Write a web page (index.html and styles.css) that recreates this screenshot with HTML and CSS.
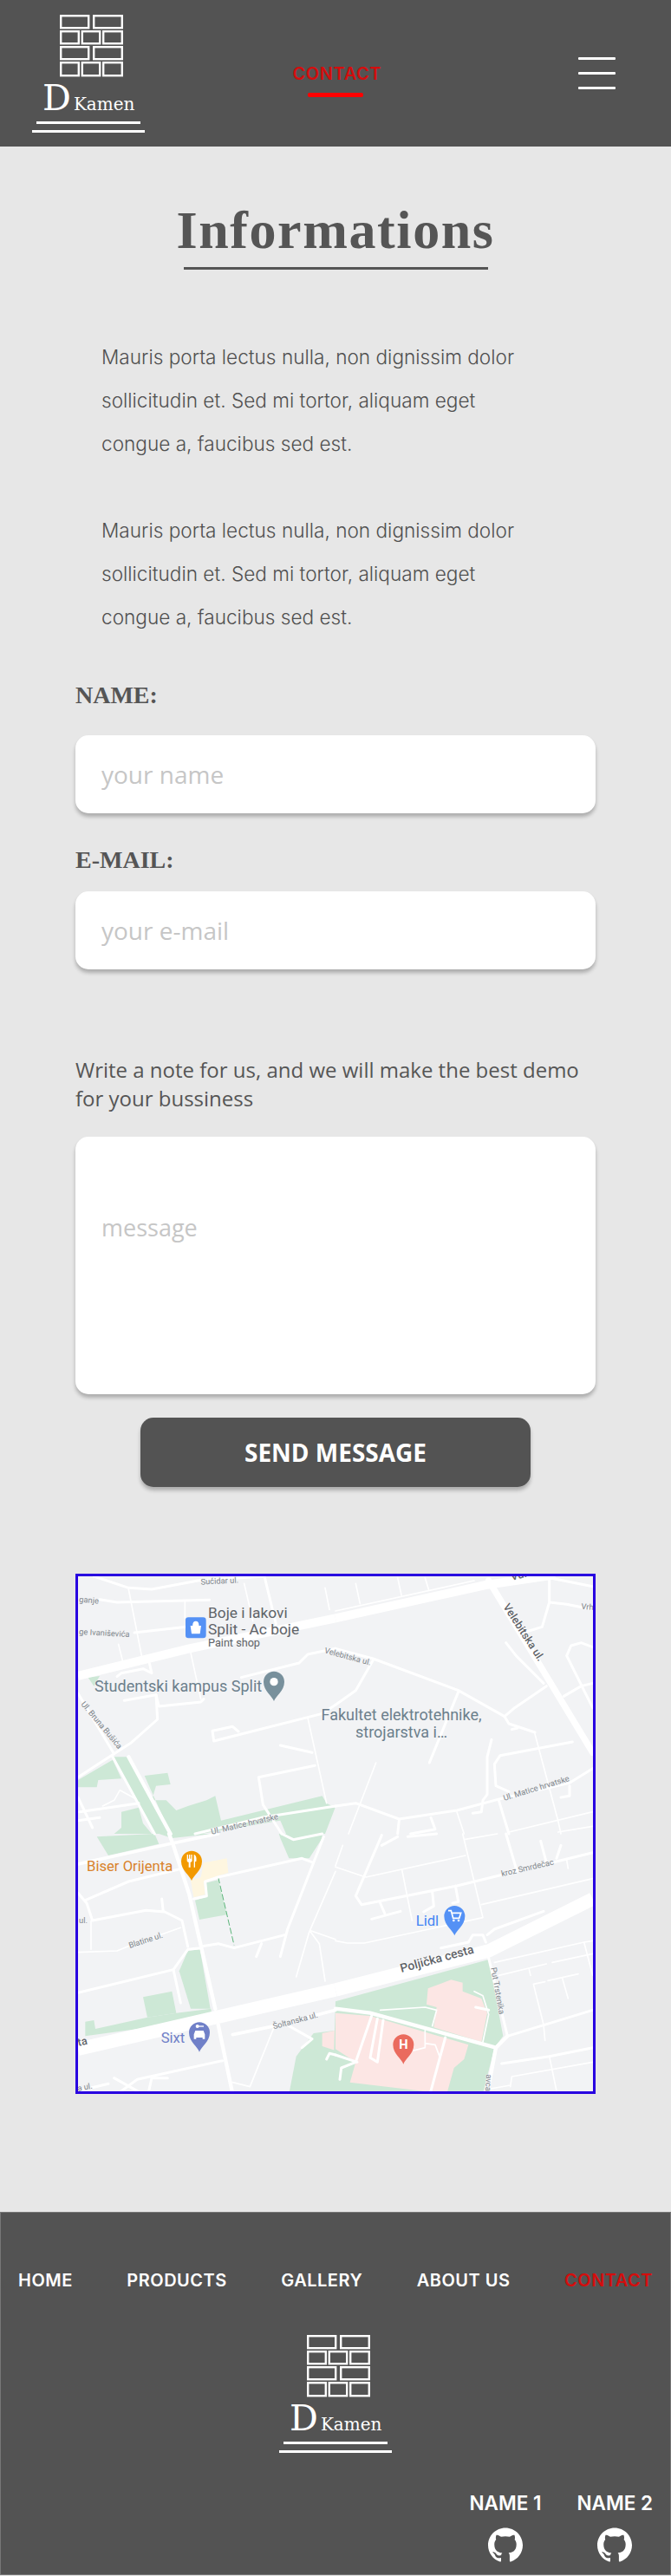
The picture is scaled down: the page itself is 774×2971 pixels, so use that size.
FILE: index.html
```html
<!DOCTYPE html>
<html lang="en">
<head>
    <meta charset="UTF-8">
    <meta name="viewport" content="width=device-width, initial-scale=1.0">
    <title>Contact</title>
    <link rel="stylesheet" href="styles.css">
</head>
<body>
    <header class="topbar">
        <a class="logo logo-top" href="#">
            <svg class="bricks" viewBox="0 0 73 72">
                <rect x="1.2" y="1.2" width="32" height="14"/><rect x="39.2" y="1.2" width="32.6" height="14"/>
                <rect x="1.2" y="19.2" width="20.6" height="14"/><rect x="25.8" y="19.2" width="20.4" height="14"/><rect x="50.2" y="19.2" width="21.6" height="14"/>
                <rect x="1.2" y="37.2" width="32" height="14"/><rect x="39.2" y="37.2" width="32.6" height="14"/>
                <rect x="1.2" y="55.2" width="20.6" height="15"/><rect x="25.8" y="55.2" width="20.4" height="15"/><rect x="50.2" y="55.2" width="21.6" height="15"/>
            </svg>
            <span class="wordmark"><span class="wordmark-d">D</span><span class="wordmark-rest">Kamen</span></span>
            <span class="logo-line short"></span>
            <span class="logo-line"></span>
        </a>
        <a class="current-page" href="#">CONTACT</a>
        <button class="burger" aria-label="Menu"><span></span><span></span><span></span></button>
    </header>

    <main class="content">
        <h1 class="title">Informations</h1>
        <div class="title-rule"></div>

        <section class="intro">
            <p>Mauris porta lectus nulla, non dignissim dolor sollicitudin et. Sed mi tortor, aliquam eget congue a, faucibus sed est.</p>
            <p>Mauris porta lectus nulla, non dignissim dolor sollicitudin et. Sed mi tortor, aliquam eget congue a, faucibus sed est.</p>
        </section>

        <form class="contact-form">
            <label class="field-label" for="name">NAME:</label>
            <input class="field" type="text" id="name" placeholder="your name">
            <label class="field-label email-label" for="email">E-MAIL:</label>
            <input class="field" type="text" id="email" placeholder="your e-mail">
            <p class="note">Write a note for us, and we will make the best demo for your bussiness</p>
            <textarea class="field message" placeholder="message"></textarea>
            <button class="send" type="submit">SEND MESSAGE</button>
        </form>

        <div class="map">
            <svg viewBox="15 15 1782 1782">
                <defs>
                    <path id="pin" d="M0 67C-5 50-36 32-36 0A36 36 0 1 1 36 0C36 32 5 50 0 67Z"/>
                </defs>
                <rect class="land" x="0" y="0" width="1812" height="1812"/>

                <!-- areas -->
                <g class="green">
                    <polygon points="50,365 90,360 70,395"/>
                    <polygon points="15,720 135,650 165,715 85,720 80,745 15,745"/>
                    <polygon points="135,640 190,640 335,906 280,906"/>
                    <polygon points="245,705 325,695 335,735 285,740 270,790 320,790 355,825 395,810 460,790 490,775 510,860 860,775 875,800 905,815 870,906 735,906 715,860 440,906 335,906"/>
                    <polygon points="165,830 225,815 240,870 270,906 140,906 165,885"/>
                </g>
                <g class="green" transform="translate(0,906)">
                    <polygon points="80,10 280,0 295,35 120,75"/>
                    <polygon points="295,0 480,0 340,15"/>
                    <polygon points="715,15 745,85 815,85 860,15 860,0 710,0"/>
                    <polygon points="420,230 455,220 455,170 500,160 530,280 435,297"/>
                    <polygon points="365,475 395,405 437,400 473,605 405,605"/>
                    <polygon points="240,565 340,545 355,620 255,635"/>
                    <polygon points="40,650 70,645 75,675 255,635 355,620 475,605 480,640 40,700"/>
                    <polygon points="745,900 770,770 830,690 906,680 906,900"/>
                </g>
                <g transform="translate(0,906)">
                    <polygon class="sand" points="405,160 440,150 450,100 530,85 535,135 500,145 450,165 455,210 415,220"/>
                    <polygon class="rose" points="860,690 906,680 906,750 860,735"/>
                    <path class="dashed" d="M500 150L555 385"/>
                </g>
                <g transform="translate(906,906)">
                    <polygon class="green" points="0,580 530,435 580,700 550,740 510,900 -10,900"/>
                    <polygon class="rose" points="320,535 400,505 440,515 440,545 505,570 525,620 505,720 340,670 350,600 315,590"/>
                    <polygon class="rose" points="0,620 120,630 460,730 445,780 410,810 385,900 50,860 70,790 0,745"/>
                </g>

                <!-- top left -->
                <g class="road w5">
                    <path d="M190 60L235 290M155 250L170 310M870 55L885 130M810 505L875 800M385 100L385 160M405 280L440 440"/>
                    <path d="M590 40L620 170"/>
                </g>
                <g class="road w8">
                    <path d="M70 15L190 55L270 60L430 30L660 15M660 15L700 180M90 95L150 105L470 97M210 210L390 190"/>
                    <path d="M150 362L165 350L240 335L270 350L262 315M175 445L285 425L295 465L440 450L450 440"/>
                    <path d="M285 425L290 510L200 590L15 710M15 420L140 630M135 640L280 906"/>
                    <path d="M580 365L780 315L810 285L906 265M485 585L480 550L550 535L570 552M485 585L860 490L906 460"/>
                    <path d="M715 600L825 625M640 710L835 670M640 710L655 805L720 906M20 830L225 800M15 780L65 885M15 860L90 850"/>
                    <path d="M420 906L650 850L906 810"/>
                </g>
                <path class="road w5" d="M100 810L140 790L160 755L215 785"/>
                <path class="road w12" d="M190 640L335 906"/>
                <path class="road w30" d="M15 360L400 265L906 160"/>

                <!-- top right -->
                <g transform="translate(906,0)">
                    <g class="road w5">
                        <path d="M70 40L85 110M215 20L228 80M310 20L322 60M0 135L480 30M690 560L770 860L780 906M140 660L45 906M420 830L445 906M600 900L890 830M770 900L890 880"/>
                    </g>
                    <g class="road w8">
                        <path d="M740 20L740 105L715 190L650 210M740 20L890 50M740 105L800 112L890 130M590 245L625 290L720 385M730 395L620 470L585 500"/>
                        <path d="M0 265L130 300L425 410L585 500L600 525L690 555M130 305L70 410L0 460M425 415L325 660M610 545L630 540"/>
                        <path d="M820 588L570 635L550 665L555 740L600 760M540 580L525 640L525 770L510 790L505 830L475 835"/>
                        <path d="M800 290L815 255L850 245L890 260M800 290L890 470M790 430L850 395L890 385"/>
                        <path d="M890 680L810 730L570 785L420 825L220 855L70 800L0 810M810 740L810 775L780 780"/>
                        <path d="M220 860L215 906M330 850L345 890L260 906M565 790L600 906"/>
                    </g>
                    <path class="road w30" d="M0 160L520 45L760 10"/>
                    <path class="road w20" d="M530 30L890 625"/>
                </g>

                <!-- bottom left -->
                <g transform="translate(0,906)">
                    <g class="road w5">
                        <path d="M60 300L60 400M15 410L150 405L200 385L370 325M695 665L610 875L550 860M815 340L770 495M820 340L850 380L870 510M820 335L906 365M906 130L815 340"/>
                    </g>
                    <g class="road w8">
                        <path d="M40 230L190 165L375 120M15 205L45 240L65 300M65 300L250 265L315 270L375 300L395 390M305 225L310 270"/>
                        <path d="M440 395L395 400L345 470L15 550M345 470L370 585M440 390L500 380L555 395L730 350"/>
                        <path d="M715 425L740 330L865 10M650 380L632 425M415 225L460 215L455 165L500 150L790 85L830 100"/>
                        <path d="M720 0L760 20L860 0M745 665L825 710L790 740M515 785L220 850L165 890M140 845L220 890M270 845L260 890M270 845L325 845M15 890L120 865"/>
                        <path d="M875 780L885 760L906 765"/>
                    </g>
                    <path class="road w10" d="M15 105L330 35L500 0M550 695L695 665L906 610"/>
                    <path class="road w12" d="M330 0L345 40L400 210L490 606M500 660L550 900"/>
                    <path class="road w45" d="M15 745L906 540"/>
                </g>

                <!-- bottom right -->
                <g transform="translate(906,906)">
                    <g class="road w5">
                        <path d="M25 40L0 110M0 115L105 150L450 75M230 125L265 300M440 0L510 290M445 20L560 0M505 245L890 155M0 370L40 378L100 378L510 290"/>
                        <path d="M740 770L765 890M605 875L610 840L890 790M520 885L605 870M550 445L860 375L890 490M860 375L890 370M565 490L730 450M750 445L890 415M670 470L675 490"/>
                        <path d="M685 520L720 660M685 520L725 512M735 508L840 485M785 500L805 570M720 660L725 715M800 90L805 120"/>
                        <path d="M310 680L310 740L270 750M310 725L345 730L360 770M155 610L310 600L350 610L335 665M480 545L510 560L530 625L510 720"/>
                    </g>
                    <g class="road w8">
                        <path d="M160 5L70 215L90 245L420 180L890 65M155 240L170 275M125 295L225 268M335 200L340 250L305 270M415 180L425 235L405 240"/>
                        <path d="M250 10L350 0M160 40L215 10M590 0L625 120M710 25L730 100M780 40L765 85"/>
                        <path d="M365 395L460 375L475 350L510 350L520 375M525 350L550 330L720 268"/>
                        <path d="M125 630L70 790L20 810L15 850M165 645L145 790L120 775L145 640M380 705L330 890M0 765L75 790M485 600L530 610M530 430L595 700M595 700L890 610M575 795L740 770L890 740"/>
                    </g>
                    <path class="road w45" d="M0 540L530 405L890 225"/>
                    <path class="road w12" d="M0 605L120 620L555 740L595 700M555 740L525 900"/>
                </g>

                <!-- street names -->
                <g class="street">
                    <text x="440" y="44" transform="rotate(-3 440 44)">Sućidar ul.</text>
                    <text x="18" y="104" transform="rotate(5 18 104)">ganje</text>
                    <text x="18" y="216" transform="rotate(3 18 216)">ge Ivaniševića</text>
                    <text x="866" y="280" transform="rotate(15 866 280)">Velebitska ul.</text>
                    <text x="24" y="458" transform="rotate(50 24 458)">Ul. Bruna Bušića</text>
                    <text x="478" y="908" transform="rotate(-13 478 908)">Ul. Matice hrvatske</text>
                    <text x="1490" y="792" transform="rotate(-17 1490 792)">Ul. Matice hrvatske</text>
                    <text x="1756" y="128" transform="rotate(5 1756 128)">Vrh</text>
                    <text x="18" y="1216">ul.</text>
                    <text x="194" y="1302" transform="rotate(-18 194 1302)">Blatine ul.</text>
                    <text x="692" y="1582" transform="rotate(-15 692 1582)">Šoltanska ul.</text>
                    <text x="15" y="1796" transform="rotate(-10 15 1796)">a ul.</text>
                    <text x="1482" y="1054" transform="rotate(-13 1482 1054)">kroz Smrdečac</text>
                    <text x="1444" y="1370" transform="rotate(80 1444 1370)">Put Trstenika</text>
                    <text x="1428" y="1738" transform="rotate(93 1428 1738)">avca</text>
                </g>
                <g class="street major">
                    <text x="1485" y="120" transform="rotate(57 1485 120)">Velebitska ul.</text>
                    <text x="1516" y="30" transform="rotate(-14 1516 30)">Vuk</text>
                    <text x="-22" y="1650" transform="rotate(-13 -22 1650)">esta</text>
                    <text class="street-wide" x="1134" y="1386" transform="rotate(-15 1134 1386)">Poljička cesta</text>
                </g>

                <!-- places -->
                <g class="place shop">
                    <text x="465" y="160">Boje i lakovi</text>
                    <text x="465" y="215">Split - Ac boje</text>
                    <text class="place-small" x="465" y="258">Paint shop</text>
                </g>
                <text class="place campus campus-name" x="72" y="415">Studentski kampus Split</text>
                <g class="place campus campus-name middle">
                    <text x="1134" y="512">Fakultet elektrotehnike,</text>
                    <text x="1134" y="573">strojarstva i…</text>
                </g>
                <text class="place food" x="45" y="1036">Biser Orijenta</text>
                <text class="place car" x="302" y="1628">Sixt</text>
                <text class="place store" x="1184" y="1224">Lidl</text>

                <rect class="pin-blue" x="387" y="157" width="71" height="72" rx="10"/>
                <path class="glyph" d="M404 186H441L437 214H408ZM414 186C414 168 431 168 431 186"/>
                <path class="glyph-line" d="M414 186C414 168 431 168 431 186M414 198C418 206 427 206 431 198"/>

                <use class="pin-teal" href="#pin" x="693" y="380"/>
                <circle class="hole" cx="693" cy="380" r="14"/>

                <use class="pin-orange" href="#pin" x="408" y="1001"/>
                <path class="glyph" d="M392 978H396V992H399V978H403V992H406V978H410V998C410 1002 406 1004 404 1004V1022H398V1004C395 1004 392 1002 392 998ZM416 978C424 980 426 990 424 1002H420V1022H416Z"/>

                <use class="pin-indigo" href="#pin" x="435" y="1594"/>
                <path class="glyph" d="M416 1600L421 1587H449L454 1600V1616H446V1611H424V1616H416Z"/>
                <circle class="glyph" cx="428" cy="1572" r="6"/>
                <rect class="glyph" x="428" y="1570" width="22" height="4"/>

                <use class="pin-blue" href="#pin" x="1318" y="1191"/>
                <path class="glyph-line" d="M1296 1172H1306L1313 1198H1334L1340 1180H1308"/>
                <circle class="glyph" cx="1315" cy="1206" r="4"/>
                <circle class="glyph" cx="1332" cy="1206" r="4"/>

                <use class="pin-red" href="#pin" x="1141" y="1636"/>
                <text class="pin-letter" x="1141" y="1651">H</text>
            </svg>
        </div>
    </main>

    <footer class="footer">
        <nav class="footer-nav">
            <a href="#">HOME</a>
            <a href="#">PRODUCTS</a>
            <a href="#">GALLERY</a>
            <a href="#">ABOUT US</a>
            <a class="active" href="#">CONTACT</a>
        </nav>
        <a class="logo logo-footer" href="#">
            <svg class="bricks" viewBox="0 0 73 72">
                <rect x="1.2" y="1.2" width="32" height="14"/><rect x="39.2" y="1.2" width="32.6" height="14"/>
                <rect x="1.2" y="19.2" width="20.6" height="14"/><rect x="25.8" y="19.2" width="20.4" height="14"/><rect x="50.2" y="19.2" width="21.6" height="14"/>
                <rect x="1.2" y="37.2" width="32" height="14"/><rect x="39.2" y="37.2" width="32.6" height="14"/>
                <rect x="1.2" y="55.2" width="20.6" height="15"/><rect x="25.8" y="55.2" width="20.4" height="15"/><rect x="50.2" y="55.2" width="21.6" height="15"/>
            </svg>
            <span class="wordmark"><span class="wordmark-d">D</span><span class="wordmark-rest">Kamen</span></span>
            <span class="logo-line short"></span>
            <span class="logo-line"></span>
        </a>
        <div class="authors">
            <a class="author" href="#">
                <span>NAME 1</span>
                <svg class="github" viewBox="0 0 24 24"><path d="M12 .297c-6.63 0-12 5.373-12 12 0 5.303 3.438 9.8 8.205 11.385.6.113.82-.258.82-.577 0-.285-.01-1.04-.015-2.04-3.338.724-4.042-1.61-4.042-1.61C4.422 18.07 3.633 17.7 3.633 17.7c-1.087-.744.084-.729.084-.729 1.205.084 1.838 1.236 1.838 1.236 1.07 1.835 2.809 1.305 3.495.998.108-.776.417-1.305.76-1.605-2.665-.3-5.466-1.332-5.466-5.93 0-1.31.465-2.38 1.235-3.22-.135-.303-.54-1.523.105-3.176 0 0 1.005-.322 3.3 1.23.96-.267 1.98-.399 3-.405 1.02.006 2.04.138 3 .405 2.28-1.552 3.285-1.23 3.285-1.23.645 1.653.24 2.873.12 3.176.765.84 1.23 1.91 1.23 3.22 0 4.61-2.805 5.625-5.475 5.92.42.36.81 1.096.81 2.22 0 1.606-.015 2.896-.015 3.286 0 .315.21.69.825.57C20.565 22.092 24 17.592 24 12.297c0-6.627-5.373-12-12-12"/></svg>
            </a>
            <a class="author" href="#">
                <span>NAME 2</span>
                <svg class="github" viewBox="0 0 24 24"><path d="M12 .297c-6.63 0-12 5.373-12 12 0 5.303 3.438 9.8 8.205 11.385.6.113.82-.258.82-.577 0-.285-.01-1.04-.015-2.04-3.338.724-4.042-1.61-4.042-1.61C4.422 18.07 3.633 17.7 3.633 17.7c-1.087-.744.084-.729.084-.729 1.205.084 1.838 1.236 1.838 1.236 1.07 1.835 2.809 1.305 3.495.998.108-.776.417-1.305.76-1.605-2.665-.3-5.466-1.332-5.466-5.93 0-1.31.465-2.38 1.235-3.22-.135-.303-.54-1.523.105-3.176 0 0 1.005-.322 3.3 1.23.96-.267 1.98-.399 3-.405 1.02.006 2.04.138 3 .405 2.28-1.552 3.285-1.23 3.285-1.23.645 1.653.24 2.873.12 3.176.765.84 1.23 1.91 1.23 3.22 0 4.61-2.805 5.625-5.475 5.92.42.36.81 1.096.81 2.22 0 1.606-.015 2.896-.015 3.286 0 .315.21.69.825.57C20.565 22.092 24 17.592 24 12.297c0-6.627-5.373-12-12-12"/></svg>
            </a>
        </div>
    </footer>
</body>
</html>
```

FILE: styles.css
```css
* {
    box-sizing: border-box;
}
body {
    margin: 0;
    background-color: #e7e7e7;
    color: #555;
    font-family: "Open Sans", sans-serif;
}
a {
    color: inherit;
    text-decoration: none;
}

/* header */
.topbar {
    height: 169px;
    background-color: #535353;
    display: grid;
    grid-template-columns: 1fr auto 1fr;
}
.logo {
    display: flex;
    flex-direction: column;
    width: 130px;
    color: white;
}
.logo-top {
    margin: 17px 0 0 37px;
}
.bricks {
    display: block;
    width: 73px;
    height: 72px;
    margin-left: 32px;
    fill: none;
    stroke: white;
    stroke-width: 2.4;
}
.wordmark {
    display: flex;
    align-items: baseline;
    height: 45px;
    margin-left: 12px;
    font-family: "DejaVu Serif", serif;
    font-weight: normal;
    line-height: 48px;
}
.wordmark-d {
    font-size: 41px;
    margin-right: 3px;
}
.wordmark-rest {
    font-size: 20px;
}
.logo-line {
    display: block;
    width: 130px;
    height: 3px;
    margin-top: 7px;
    background-color: white;
}
.logo-line.short {
    width: 120px;
    margin: 6px 0 0 5px;
}
.current-page {
    align-self: start;
    margin-top: 71px;
    width: 99px;
    color: #d40d0d;
    font-family: Inter, sans-serif;
    font-size: 20px;
    font-weight: 600;
    line-height: 28px;
    letter-spacing: 0.6px;
    white-space: nowrap;
    position: relative;
}
.current-page::after {
    content: "";
    position: absolute;
    left: 17px;
    top: 36px;
    width: 64px;
    height: 5px;
    border-radius: 2px;
    background-color: #f00;
}
.burger {
    justify-self: end;
    align-self: start;
    width: 43px;
    margin: 66px 64px 0 0;
    padding: 0;
    border: none;
    background: none;
    display: flex;
    flex-direction: column;
    gap: 14px;
}
.burger span {
    display: block;
    height: 3px;
    border-radius: 1px;
    background-color: white;
}

/* content */
.title {
    margin: 62px 0 0;
    text-align: center;
    font-family: "Liberation Serif", serif;
    font-size: 62px;
    font-weight: bold;
    line-height: 68px;
    letter-spacing: 1.6px;
}
.title-rule {
    width: 351px;
    height: 3px;
    margin: 9px auto 0;
    background-color: #555;
}
.intro {
    margin: 76px 0 0;
    padding: 0 147px 0 117px;
    font-family: Inter, sans-serif;
    font-size: 22.6px;
    font-weight: 300;
    line-height: 50px;
    color: #505050;
}
.intro p {
    margin: 0 0 50px;
}
.contact-form {
    width: 600px;
    margin: -2px 0 0 87px;
    display: flex;
    flex-direction: column;
}
.field-label {
    font-family: "Liberation Serif", serif;
    font-size: 28px;
    font-weight: bold;
    line-height: 34px;
    margin-bottom: 29px;
}
.email-label {
    margin: 37px 0 19px;
}
.field {
    display: block;
    width: 100%;
    height: 90px;
    padding: 0 30px;
    border: none;
    border-radius: 15px;
    background-color: white;
    box-shadow: 0 4px 4px rgba(0, 0, 0, 0.25);
    font-family: "Open Sans", sans-serif;
    font-size: 28px;
    color: #555;
}
.field::placeholder {
    color: #c6c6c6;
    opacity: 1;
}
.note {
    margin: 99px 0 28px;
    font-size: 24px;
    line-height: 33px;
}
.message {
    height: 297px;
    padding-top: 86px;
    font-size: 27px;
    line-height: 38px;
    resize: none;
}
.send {
    align-self: center;
    width: 450px;
    height: 80px;
    margin-top: 27px;
    border: none;
    border-radius: 15px;
    background-color: #535353;
    box-shadow: 0 4px 4px rgba(0, 0, 0, 0.25);
    color: white;
    font-family: "Open Sans", sans-serif;
    font-size: 28px;
    font-weight: bold;
}

/* map */
.map {
    width: 600px;
    height: 600px;
    margin: 100px 0 136px 87px;
    border: 3px solid #2800e0;
}
.map svg {
    display: block;
    width: 594px;
    height: 594px;
    font-family: Roboto, sans-serif;
}
.land { fill: #f2f3f5; }
.green { fill: #cde8d6; }
.rose { fill: #fce6e4; }
.sand { fill: #fef6e0; }
.dashed {
    fill: none;
    stroke: #5cb57a;
    stroke-width: 3;
    stroke-dasharray: 22 8;
}
.road path, path.road {
    fill: none;
    stroke: white;
    stroke-linecap: round;
    stroke-linejoin: round;
}
.road.w5 path, path.road.w5 { stroke-width: 5; }
.road.w8 path, path.road.w8 { stroke-width: 9; }
path.road.w10 { stroke-width: 11; }
path.road.w12 { stroke-width: 13; }
path.road.w20 { stroke-width: 22; }
path.road.w30 { stroke-width: 30; stroke-linecap: butt; }
path.road.w45 { stroke-width: 46; stroke-linecap: butt; }
.street text {
    font-size: 28px;
    fill: #80868b;
    stroke: #f2f3f5;
    stroke-width: 3;
    paint-order: stroke;
}
.street.major text {
    font-size: 38px;
    font-weight: 500;
    fill: #5f6368;
    stroke: white;
}
.street.major .street-wide {
    font-size: 42px;
}
.place {
    font-size: 50px;
    stroke: #f2f3f5;
    stroke-width: 3;
    paint-order: stroke;
}
.shop { fill: #5f6368; font-size: 52px; }
.place-small { font-size: 38px; }
.campus { fill: #6c7f8c; }
.campus-name { font-size: 54px; }
.middle { text-anchor: middle; }
.food { fill: #d9822b; }
.car { fill: #7080c8; }
.store { fill: #4285f4; }
.pin-blue { fill: #5491f5; }
.pin-teal { fill: #78909c; }
.pin-orange { fill: #f29900; }
.pin-indigo { fill: #7080c8; }
.pin-red { fill: #ea6b5e; }
.hole, .glyph { fill: white; }
.glyph-line {
    fill: none;
    stroke: white;
    stroke-width: 5;
}
.pin-letter {
    fill: white;
    font-size: 44px;
    font-weight: bold;
    text-anchor: middle;
}

/* footer */
.footer {
    height: 419px;
    padding: 0 20px;
    border: 1px solid #777;
    background-color: #535353;
    color: white;
    font-family: Inter, sans-serif;
    font-weight: 600;
    display: flex;
    flex-direction: column;
}
.footer-nav {
    display: flex;
    justify-content: space-between;
    margin-top: 64px;
    font-size: 20px;
    line-height: 28px;
    letter-spacing: 0.5px;
}
.footer-nav .active {
    color: #d40d0d;
}
.logo-footer {
    margin: 49px 0 0 301px;
}
.authors {
    display: flex;
    justify-content: flex-end;
    gap: 41px;
    margin-top: 43px;
    font-size: 22.5px;
    line-height: 30px;
}
.author {
    display: flex;
    flex-direction: column;
    align-items: center;
    gap: 13px;
}
.github {
    width: 40px;
    height: 40px;
    fill: white;
}
```
